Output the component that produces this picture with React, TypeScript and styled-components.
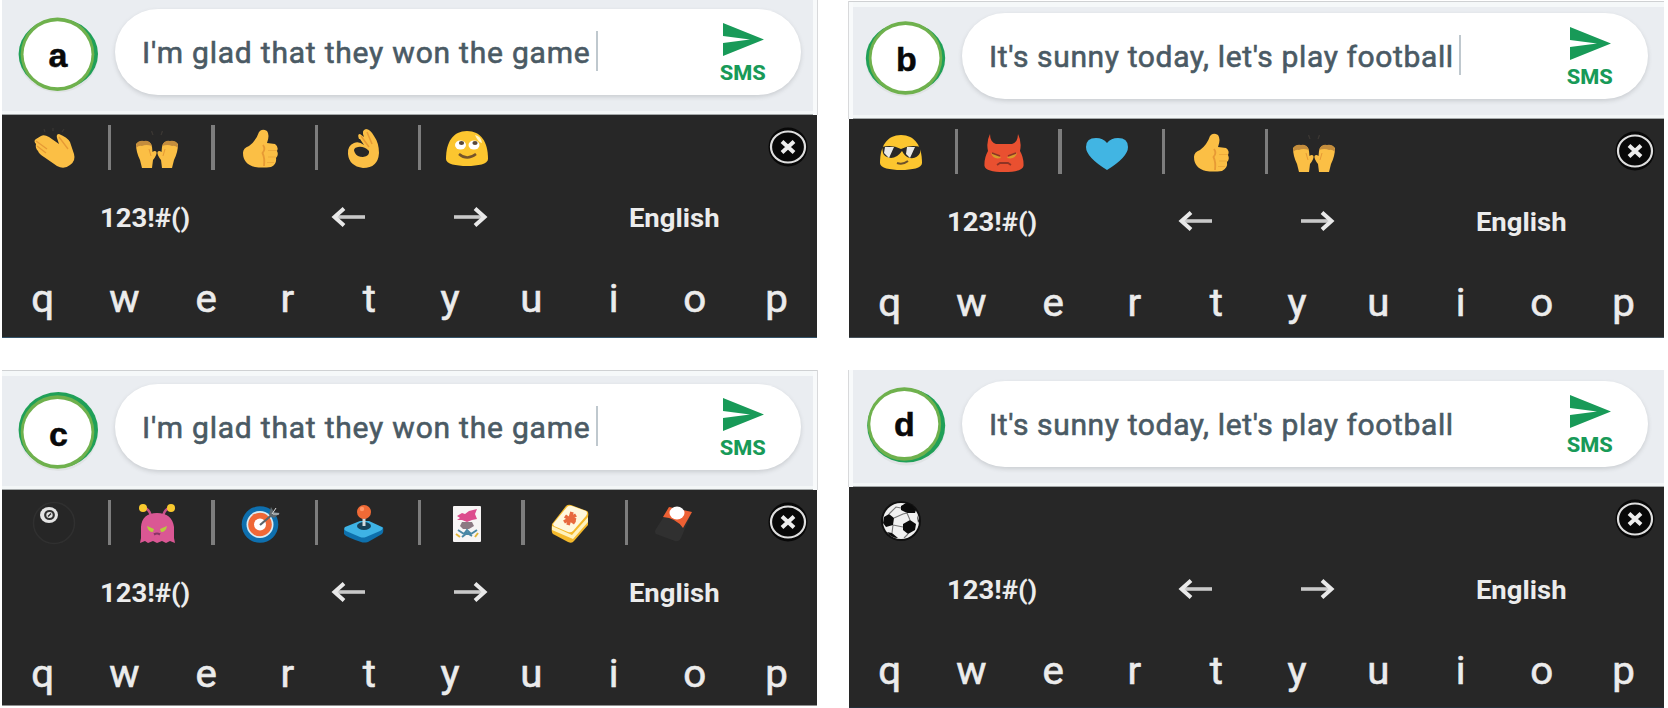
import React from 'react';
import styled, { createGlobalStyle } from 'styled-components';

const GlobalStyle = createGlobalStyle`
  body { margin: 0; background: #fff; font-family: Roboto, "Liberation Sans", sans-serif; }
  * { box-sizing: border-box; }
`;

const Page = styled.main`
  display: grid;
  grid-template-columns: 815px 815px;
  grid-template-rows: 338px 338px;
  gap: 32px;
  padding-left: 2px;
  width: 1668px;
  height: 708px;
  overflow: hidden;
`;

const Panel = styled.section<{ $top: number; $height: number }>`
  display: flex;
  flex-direction: column;
  margin-top: ${p => p.$top}px;
  height: ${p => p.$height}px;
`;

const Composer = styled.div<{ $height: number; $side: 'left' | 'right'; $line?: boolean }>`
  display: flex;
  flex: none;
  align-items: flex-end;
  height: ${p => p.$height}px;
  background: #eaedf1;
  border-top: ${p => (p.$line ? '1px solid #cfd1d3' : '0')};
  box-shadow:
    ${p => (p.$side === 'right' ? '1px 0 0 #d8d9db' : '-1px 0 0 #d8d9db')},
    inset ${p => (p.$side === 'right' ? '-4px' : '4px')} 0 0 #f8fafb,
    inset 0 -1px 0 #a5a9aa,
    inset 0 -4px 0 #f3f6f7,
    inset 0 ${p => (p.$line ? '5px' : '0')} 0 #f5f8f9;
`;

const BadgeSvg = styled.svg`
  flex: none;
  width: 113px;
  height: 115px;
  text { font: bold 34px "Liberation Sans", Arial, sans-serif; fill: #090909; stroke: #090909; stroke-width: 0.5px; }
`;

const Pill = styled.div`
  display: flex;
  align-items: center;
  width: 686px;
  height: 86px;
  margin-bottom: 20px;
  padding: 0 35px 0 27px;
  border-radius: 43px;
  background: #fff;
  box-shadow: 0 2px 4px rgba(90, 95, 100, 0.22);
`;

const Message = styled.span<{ $spacing: number }>`
  padding-top: 2px;
  font-size: 30px;
  line-height: 36px;
  letter-spacing: ${p => p.$spacing}px;
  color: #4a5a64;
  -webkit-text-stroke: 0.6px #4a5a64;
  white-space: nowrap;
`;

const Caret = styled.span`
  width: 2px;
  height: 40px;
  margin: -2px 0 0 5px;
  background: #bfc8ce;
`;

const Send = styled.div`
  display: flex;
  flex-direction: column;
  align-items: center;
  width: 46px;
  margin-left: auto;
  padding-top: 4px;
  color: #189a58;
  svg { width: 41px; height: 33px; margin-bottom: 5px; }
`;

const SendLabel = styled.span`
  font-size: 20.5px;
  font-weight: 800;
  line-height: 24px;
  transform: scaleX(1.06);
`;

const Keyboard = styled.div<{ $edge: string }>`
  flex: 1;
  background: #272727;
  border-bottom: 1px solid ${p => p.$edge};
  overflow: hidden;
`;

const Suggestions = styled.div`
  display: flex;
  align-items: center;
  height: 64px;
  padding: 0 8px 0 6px;
`;

const Slot = styled.div`
  display: flex;
  align-items: center;
  width: 103.35px;
  padding-left: 23.5px;
`;

const EmojiSvg = styled.svg`
  flex: none;
  width: 44px;
  height: 44px;
  overflow: visible;
`;

const Divider = styled.span`
  width: 4px;
  height: 45px;
  margin-left: 32.4px;
  background: #7d7d7d;
`;

const CloseSvg = styled.svg`
  width: 42px;
  height: 42px;
  margin-left: auto;
`;

const Functions = styled.div`
  display: grid;
  grid-template-columns: 287px 118px 127px 280px;
  align-items: center;
  justify-items: center;
  height: 76px;
  padding-top: 2px;
  color: #ececec;
  svg { width: 36px; height: 24px; margin-top: -3px; }
`;

const FunctionLabel = styled.span`
  font-size: 25px;
  font-weight: 700;
  transform: scaleX(1.1);
`;

const Keys = styled.div`
  display: grid;
  grid-template-columns: repeat(10, 1fr);
  justify-items: center;
  padding-top: 20px;
  color: #ececec;
  font-size: 38px;
  line-height: 48px;
  -webkit-text-stroke: 0.6px #ececec;
`;

const Key = styled.span`
  transform: scaleX(1.06);
`;

const HAND = '#fbbf45';
const SHADE = '#e79a35';

const blob = 'M1 34 C1 17 8 6 22 6 S43 17 43 34 C43 39 33 41 22 41 S1 39 1 34Z';

const handHalf = (
  <g>
    <path d="M1 19 Q4 15 10 17 Q16 16 17 22 L17.5 27 Q20 25 21.5 27 Q22 30 18 35 L17 43 H7 L5 35 Q1 27 1 19Z" fill={HAND} />
    <path d="M1 20 Q3 15 9 16 Q15 15 17 21 Q11 19 7 21 Q4 20 1 23Z" fill="#c48d3d" />
    <path d="M14 24 L16 31" stroke={SHADE} strokeWidth="1" fill="none" />
    <path d="M18 10l-1.5-4" stroke="#3d3935" strokeWidth="1.2" />
  </g>
);

const emojis: Record<string, React.ReactNode> = {
  clap: (
    <>
      <path d="M9 11 L4 14 Q1 16 4 19 Q3 23 6 26 Q7 29 12 32 L25 41 Q32 45 38 40 Q44 36 42 29 L38 17 Q35 12 27 9 Q24 9 25 13 L27 19 L17 12 Q12 9 9 11Z" fill={HAND} />
      <path d="M4 16l11 8M5 21l9 7M27 12l9 12" stroke={SHADE} strokeWidth="1.3" fill="none" />
      <path d="M13 7l-1-3M21 6V3M30 7l2-3" stroke="#3a3734" strokeWidth="1.2" />
    </>
  ),
  hands: (
    <>
      {handHalf}
      <g transform="matrix(-1 0 0 1 44 0)">{handHalf}</g>
    </>
  ),
  thumb: (
    <>
      <path d="M5 28 Q5 23 11 21 Q18 16 21 7 Q24 3 29 6 Q32 10 29 18 L37 19 Q41 22 39 26 Q41 30 38 33 Q39 39 33 42 Q24 43 17 42 Q5 39 5 28Z" fill={HAND} />
      <path d="M25 20 Q28 24 24.5 28 Q27 33 26 41" stroke={SHADE} strokeWidth="1.8" fill="none" />
      <path d="M30 25.5h9M30 32h8M29 37.5h7" stroke="#eeab3b" strokeWidth="1.2" fill="none" />
    </>
  ),
  ok: (
    <>
      <path fillRule="evenodd" d="M17 14 Q15 9 18 9 L22 12 Q19 5 24 4 Q28 4 32 11 Q37 18 37 28 Q36 43 21 43 Q7 41 6 29 Q5 21 12 18 Q17 16 22 20 L18 14ZM13 28 Q15 32 21 32 Q28 31 27 26 Q22 21 16 22 Q10 23 13 28Z" fill={HAND} />
      <path d="M19 11l8 11M25 7l5 12" stroke={SHADE} strokeWidth="1.5" fill="none" />
    </>
  ),
  eyes: (
    <>
      <path d={blob} fill="#fcc62f" />
      <ellipse cx="15.5" cy="20" rx="5.5" ry="4.5" fill="#fff" />
      <ellipse cx="29" cy="20" rx="5.5" ry="4.5" fill="#fff" />
      <path d="M30 10 Q36 11 37 18 Q33 17 30 10Z" fill="#fff6c8" />
      <ellipse cx="16.5" cy="18" rx="2.6" ry="2" fill="#58483a" />
      <ellipse cx="30" cy="18" rx="2.6" ry="2" fill="#58483a" />
      <path d="M14 29 Q22 36 31 29" stroke="#75542a" strokeWidth="2.4" fill="none" />
    </>
  ),
  cool: (
    <>
      <path d={blob} fill="#fcc62f" />
      <path d="M3 18 Q13 15 22 20 Q31 15 42 18 L41 24 Q38 30 31 29 Q26 28 23 22 Q18 29 12 29 Q5 28 4 24Z" fill="#292827" />
      <path d="M6 18l9 0-5 11-5-5Z M28 18l8 0-5 11-4-4Z" fill="#e9e9e7" />
      <path d="M18 34q6 2 11-2" stroke="#6d512a" strokeWidth="2" fill="none" />
    </>
  ),
  devil: (
    <>
      <path d="M8 5 Q4 13 6 22 Q2 29 2.5 37 Q4 43 22 43 T41.5 37 Q42 29 38 22 Q40 13 36 5 Q36 13 30 15 H14 Q8 13 8 5Z" fill="#e95030" />
      <path d="M9 24 Q16 24 19 29 Q11 31 9 24ZM35 24 Q28 24 25 29 Q33 31 35 24Z" fill="#d99a2c" />
      <path d="M15 36 L18 34 H26 L29 36M10 24l8 3M34 24l-8 3" stroke="#8e3425" strokeWidth="1.8" fill="none" />
    </>
  ),
  heart: <path d="M22 41 Q1 28 1 18 Q1 9 11 9 Q18 9 22 14 Q26 9 33 9 Q43 9 43 18 Q43 28 22 41Z" fill="#41b5e3" />,
  eight: (
    <>
      <circle cx="22" cy="23" r="20.5" fill="#262626" stroke="#303030" strokeWidth="1.5" />
      <ellipse cx="17" cy="15" rx="9" ry="8" fill="#e4e4e4" />
      <ellipse cx="17.5" cy="15" rx="4.3" ry="4" fill="none" stroke="#303030" strokeWidth="2.2" />
      <path d="M16 16.5l3-3" stroke="#303030" strokeWidth="1.5" />
    </>
  ),
  alien: (
    <>
      <path d="M9 8q6 1 7 9M35 8q-6 1-7 9" stroke="#c8508a" strokeWidth="2.4" fill="none" />
      <circle cx="8" cy="8" r="4" fill="#f9c92e" />
      <circle cx="36" cy="8" r="4" fill="#f9c92e" />
      <path d="M6 27 Q7 13 22 13 T39 27 V38 L40 43 L35 41 L31 43 L27 41 L22 43 L18 41 L13 43 L10 41 L5 43 L6 38Z" fill="#da5794" />
      <path d="M12 26l7 3-1 3q-5 0-6-6ZM32 26l-7 3 1 3q5 0 6-6Z" fill="#b8cb3e" />
      <path d="M19 34.5q3-2 6 0" stroke="#883564" strokeWidth="2.2" fill="none" />
    </>
  ),
  dart: (
    <>
      <circle cx="22" cy="24.5" r="18.3" fill="#0e6fae" />
      <circle cx="22" cy="24.5" r="13.5" fill="#d8edf6" />
      <circle cx="22" cy="24.5" r="11.8" fill="#ef6837" />
      <circle cx="22" cy="24.5" r="6" fill="#fff" />
      <path d="M22 25 L36 13" stroke="#5a646a" strokeWidth="2.2" />
      <path d="M31 15l2-8 3 5 6 1-6 5Z" fill="#5f686c" />
      <path d="M34 14l4-6M35 14l6 0" stroke="#ddd" strokeWidth="1" />
    </>
  ),
  joystick: (
    <>
      <path d="M2 29 L2 34 Q4 37 19 42 Q22 43 26 42 L40 34 Q42 32 41 27Z" fill="#0e70ac" />
      <path d="M3 27 L18 21 H27 L40 27 Q42 29 38 31 L24 37 Q21 38 18 37 L4 31 Q1 29 3 27Z" fill="#3eb3e5" />
      <ellipse cx="22" cy="26" rx="7" ry="4" fill="#174158" />
      <path d="M22 16v10" stroke="#d3dadd" strokeWidth="3" />
      <circle cx="22" cy="12" r="7" fill="#f06a36" />
      <circle cx="20" cy="9" r="2.2" fill="#ff9566" />
    </>
  ),
  flower: (
    <>
      <rect x="8" y="6" width="28" height="36" rx="1" fill="#f7f5f5" />
      <path d="M12 16 L17 13 L20 14 L24 11 L32 9 L30 14 L32 19 L27 20 L22 22 L17 20 L12 20 L15 18Z" fill="#dc4c8d" />
      <path d="M17 22l10 0 2 4-5 3h-6l-3-3Z" fill="#8c7a83" />
      <path d="M13 30l6 4 3-4 4 4 6-4M17 37l5-4 5 3" stroke="#4a87a5" strokeWidth="2" fill="none" />
      <path d="M11 34l4 3M33 33l-3 4" stroke="#e0b63b" strokeWidth="2" />
    </>
  ),
  mahjong: (
    <>
      <path d="M4 24 L18 6 Q20 4 23 5 L39 11 Q41 12 40 17 L40 25 L26 41 Q24 44 20 42 L5 34 Q3 33 4 24Z" fill="#f4b92b" />
      <path d="M4 26l20 9 16-18v5L25 39 4 30Z" fill="#fff2bd" />
      <path d="M5 24 L19 7 Q21 5 24 6 L38 11 Q40 13 38 16 L25 31 Q23 33 20 32 L6 26Z" fill="#fff8dd" />
      <path d="M16 22l12-7M17 16l10 7M24 12l-4 13M18 18l10 2" stroke="#e86a3e" strokeWidth="3.6" />
    </>
  ),
  hwatu: (
    <>
      <path d="M18 7 L40 12 L29 38 Q27 42 23 41 L4 34 Q2 32 4 29Z" fill="#303030" />
      <path d="M17 7 L40 12 L31 28 Q24 18 11 17Z" fill="#ed6033" />
      <ellipse cx="25" cy="13" rx="7.5" ry="6.5" fill="#fff" />
    </>
  ),
  soccer: (
    <>
      <circle cx="22" cy="24" r="20" fill="#101010" />
      <circle cx="22" cy="24" r="18" fill="#f0f0f0" />
      <path d="M22 9 L27 6 Q34 8 37 13 L36 16 L28 16 L22 13Z M5 20 L10 17 L15 21 L14 28 L7 30 L4 26Z M24 27 L31 23 L37 27 L36 33 L29 37 L24 33Z M8 35 L13 36 L19 41 Q12 41 8 35Z M38 18 L40 24 L39 26Z" fill="#0b0b0b" />
      <path d="M10 17 L17 10 L22 11M28 16L31 23M15 21L24 17L28 16M14 28L24 30M29 37l-4 4M13 36l1-8" stroke="#777" strokeWidth="1.1" fill="none" />
    </>
  ),
};

type Ring = { cx: number; cy: number; rx: number; ry: number; wx: number; wy: number; ly: number; lx: number };

const rings: Record<string, Ring> = {
  a: { cx: 58.3, cy: 54, rx: 39.7, ry: 35.5, wx: 57.5, wy: 54.3, lx: 58, ly: 67 },
  b: { cx: 58.5, cy: 54, rx: 39.7, ry: 35.5, wx: 58.5, wy: 54, lx: 59.5, ly: 67 },
  c: { cx: 58.3, cy: 55, rx: 39.7, ry: 38, wx: 57.5, wy: 57, lx: 58.5, ly: 70.5 },
  d: { cx: 59.2, cy: 53.5, rx: 39, ry: 37, wx: 57.3, wy: 52, lx: 57.3, ly: 63.5 },
};

function Badge({ letter }: { letter: string }) {
  const r = rings[letter];
  return (
    <BadgeSvg viewBox="2 0 113 115">
      <ellipse cx={r.cx} cy={r.cy + 2} rx={r.rx} ry={r.ry + 1} fill="#e0e3e5" />
      <ellipse cx={r.cx} cy={r.cy} rx={r.rx} ry={r.ry} fill="#20a058" />
      <ellipse cx={r.wx} cy={r.wy} rx="36.8" ry="36.8" fill="#6fb14d" />
      <ellipse cx={r.wx} cy={r.wy} rx="34" ry="33" fill="#fff" />
      <text x={r.lx} y={r.ly} textAnchor="middle">{letter}</text>
    </BadgeSvg>
  );
}

function Arrow({ flip }: { flip?: boolean }) {
  return (
    <svg viewBox="0 0 36 24" fill="none" stroke="#e9e9e9">
      <g transform={flip ? 'matrix(-1 0 0 1 36 0)' : undefined}>
        <path d="M4 12H35" strokeWidth="3.6" stroke="#c9c9c9" />
        <path d="M14 3.5 L4.5 12 L14 20.5" strokeWidth="4" />
      </g>
    </svg>
  );
}

type PanelData = {
  letter: string;
  message: string;
  spacing: number;
  caret?: boolean;
  items: string[];
  top: number;
  height: number;
  composer: number;
  side: 'left' | 'right';
  line?: boolean;
  edge: string;
};

const GLAD = "I'm glad that they won the game";
const SUNNY = "It's sunny today, let's play football";

const panels: PanelData[] = [
  { letter: 'a', message: GLAD, spacing: 0.79, caret: true, items: ['clap', 'hands', 'thumb', 'ok', 'eyes'], top: 0, height: 338, composer: 115, side: 'right', edge: '#34546a' },
  { letter: 'b', message: SUNNY, spacing: 0.63, caret: true, items: ['cool', 'devil', 'heart', 'thumb', 'hands'], top: 1, height: 337, composer: 118, side: 'left', line: true, edge: '#45515a' },
  { letter: 'c', message: GLAD, spacing: 0.79, caret: true, items: ['eight', 'alien', 'dart', 'joystick', 'flower', 'mahjong', 'hwatu'], top: 0, height: 336, composer: 120, side: 'right', line: true, edge: '#8f8f8f' },
  { letter: 'd', message: SUNNY, spacing: 0.63, items: ['soccer'], top: 0, height: 338, composer: 117, side: 'left', edge: '#22303a' },
];

export default function App() {
  return (
    <>
      <GlobalStyle />
      <Page>
        {panels.map(p => (
          <Panel key={p.letter} $top={p.top} $height={p.height}>
            <Composer $height={p.composer} $side={p.side} $line={p.line}>
              <Badge letter={p.letter} />
              <Pill>
                <Message $spacing={p.spacing}>{p.message}</Message>
                {p.caret && <Caret />}
                <Send>
                  <svg viewBox="0 0 41 33"><path d="M0 0 L41 16.5 L0 33 V20 L27 16.5 L0 13Z" fill="#189a58" /></svg>
                  <SendLabel>SMS</SendLabel>
                </Send>
              </Pill>
            </Composer>
            <Keyboard $edge={p.edge}>
              <Suggestions>
                {p.items.map((name, i) => (
                  <Slot key={name}>
                    <EmojiSvg viewBox="0 0 44 44">{emojis[name]}</EmojiSvg>
                    {i < p.items.length - 1 && <Divider />}
                  </Slot>
                ))}
                <CloseSvg viewBox="0 0 42 42">
                  <circle cx="21" cy="21" r="19.5" fill="#080808" />
                  <ellipse cx="21" cy="21" rx="17" ry="15.5" fill="none" stroke="#dedede" strokeWidth="2.2" />
                  <path d="M15 15.5L27 26.5M27 15.5L15 26.5" stroke="#ededed" strokeWidth="4" />
                </CloseSvg>
              </Suggestions>
              <Functions>
                <FunctionLabel>123!#()</FunctionLabel>
                <Arrow />
                <Arrow flip />
                <FunctionLabel>English</FunctionLabel>
              </Functions>
              <Keys>
                {'qwertyuiop'.split('').map(k => <Key key={k}>{k}</Key>)}
              </Keys>
            </Keyboard>
          </Panel>
        ))}
      </Page>
    </>
  );
}
